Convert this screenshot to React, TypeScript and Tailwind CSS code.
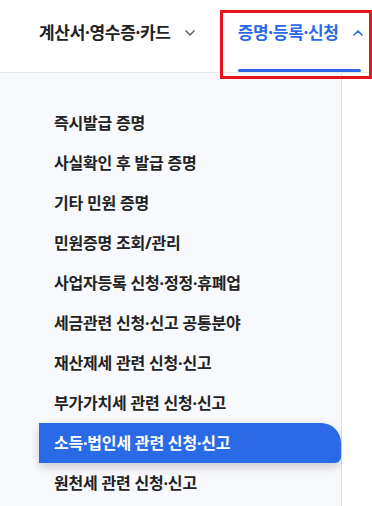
import { ChevronDown, ChevronUp } from 'lucide-react'

const menuItems = [
  '즉시발급 증명',
  '사실확인 후 발급 증명',
  '기타 민원 증명',
  '민원증명 조회/관리',
  '사업자등록 신청·정정·휴폐업',
  '세금관련 신청·신고 공통분야',
  '재산제세 관련 신청·신고',
  '부가가치세 관련 신청·신고',
  '소득·법인세 관련 신청·신고',
  '원천세 관련 신청·신고',
]

const activeIndex = 8

export default function App() {
  return (
    <div
      className="relative w-[372px] h-[506px] overflow-hidden bg-white"
      style={{ fontFamily: '"Noto Sans", "Noto Sans CJK KR", sans-serif' }}
    >
      {/* Top nav */}
      <header className="h-[73px] border-b border-[#e6e8ec] flex items-start">
        <div className="flex items-center h-[66px] pl-[39px] gap-[11px] whitespace-nowrap">
          <span className="text-[17px] font-bold text-[#222] tracking-[-0.3px]">계산서·영수증·카드</span>
          <ChevronDown className="w-[16px] h-[16px] text-[#666]" strokeWidth={2.5} />
        </div>
        <div className="relative flex items-center h-[66px] ml-[40px] gap-[11px] whitespace-nowrap">
          <span className="text-[17px] font-bold text-[#2b6ae6] tracking-[-0.3px]">증명·등록·신청</span>
          <ChevronUp className="w-[16px] h-[16px] text-[#2b6ae6]" strokeWidth={2.5} />
          <div className="absolute left-0 w-[123px] top-[69px] h-[3px] rounded-full bg-[#2b6ae6]" />
        </div>
      </header>

      {/* Body */}
      <div className="flex h-[433px]">
        <nav className="w-[342px] bg-[#f8f9fd] border-r border-[#d9e1f0] pt-[30px]">
          <ul className="flex flex-col">
            {menuItems.map((item, i) => (
              <li key={item}>
                <a
                  className={`flex items-center h-[40px] ml-[39px] pl-[15px] text-[16px] font-bold tracking-[-0.2px] whitespace-nowrap ${
                    i === activeIndex
                      ? 'bg-[#2b6ae6] text-white rounded-tr-[20px] rounded-br-[6px] shadow-[0_4px_10px_rgba(0,0,0,0.18)]'
                      : 'text-[#222]'
                  }`}
                >
                  {item}
                </a>
              </li>
            ))}
          </ul>
        </nav>
        <div className="flex-1 bg-white" />
      </div>

      {/* Highlight box annotation */}
      <div className="absolute left-[220px] top-[10px] w-[152px] h-[69px] border-[3px] border-[#e8141b]" />
    </div>
  )
}
